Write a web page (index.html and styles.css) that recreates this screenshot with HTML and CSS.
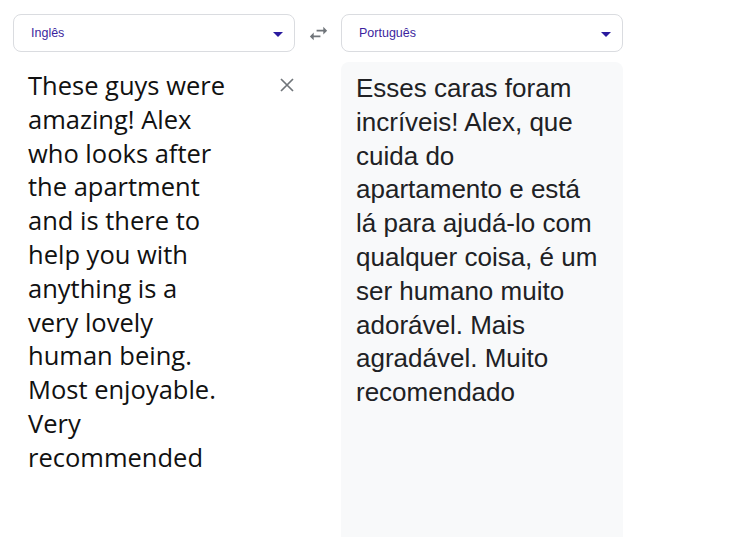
FILE: index.html
```html
<!DOCTYPE html>
<html lang="pt">
<head>
<meta charset="utf-8">
<title>Tradutor</title>
<link rel="stylesheet" href="styles.css">
</head>
<body>
<div class="translator">
  <div class="bar">
    <div class="select">
      <span class="lang">Inglês</span>
      <span class="caret"></span>
    </div>
    <div class="swap">
      <svg width="23" height="23" viewBox="0 0 24 24"><path d="M6.99 11L3 15l3.99 4v-3H14v-2H6.99v-3zM21 9l-3.99-4v3H10v2h7.01v3L21 9z" fill="#70757a"/></svg>
    </div>
    <div class="select">
      <span class="lang">Português</span>
      <span class="caret"></span>
    </div>
  </div>
  <div class="panes">
    <div class="source">
      <p class="src-text">These guys were<br>amazing! Alex<br>who looks after<br>the apartment<br>and is there to<br>help you with<br>anything is a<br>very lovely<br>human being.<br>Most enjoyable.<br>Very<br>recommended</p>
      <span class="clear">
        <svg width="14" height="14" viewBox="0 0 14 14"><path d="M1 1L13 13M13 1L1 13" stroke="#70757a" stroke-width="1.7"/></svg>
      </span>
    </div>
    <div class="target">
      <p class="tgt-text">Esses caras foram<br>incríveis! Alex, que<br>cuida do<br>apartamento e está<br>lá para ajudá-lo com<br>qualquer coisa, é um<br>ser humano muito<br>adorável. Mais<br>agradável. Muito<br>recomendado</p>
    </div>
  </div>
</div>
</body>
</html>
```
FILE: styles.css
```css
html, body {
  margin: 0;
  padding: 0;
  background: #ffffff;
  height: 100%;
  overflow: hidden;
}
.translator {
  padding: 14px 0 0 13px;
  width: 611px;
  font-family: "Liberation Sans", Arial, sans-serif;
}
.bar {
  display: flex;
  align-items: center;
}
.select {
  width: 282px;
  height: 38px;
  box-sizing: border-box;
  border: 1px solid #dadce0;
  border-radius: 8px;
  display: flex;
  align-items: center;
  justify-content: space-between;
  padding: 0 11px 0 17px;
}
.lang {
  font-size: 12.5px;
  color: #3c1f9e;
}
.caret {
  width: 0;
  height: 0;
  border-left: 5px solid transparent;
  border-right: 5px solid transparent;
  border-top: 5px solid #2a1a9e;
  margin-top: 2px;
}
.swap {
  width: 46px;
  display: flex;
  justify-content: center;
  align-items: center;
  height: 38px;
  padding-top: 1px;
  box-sizing: border-box;
}
.panes {
  display: flex;
  margin-top: 10px;
  gap: 46px;
}
.source {
  width: 282px;
  display: flex;
  justify-content: space-between;
  padding: 0 1px 0 15px;
  box-sizing: border-box;
}
.src-text {
  margin: 7px 0 0 0;
  font-family: "Open Sans", "Lato", sans-serif;
  font-size: 25.5px;
  line-height: 33.8px;
  color: #111111;
}
.clear {
  display: block;
  margin-top: 16px;
  width: 14px;
  height: 14px;
}
.target {
  width: 282px;
  height: 500px;
  background: #f8f9fa;
  border-radius: 8px 8px 0 0;
  padding: 0 15px;
  box-sizing: border-box;
}
.tgt-text {
  margin: 0;
  padding-top: 10px;
  font-size: 26px;
  line-height: 33.8px;
  color: #202124;
}
```
